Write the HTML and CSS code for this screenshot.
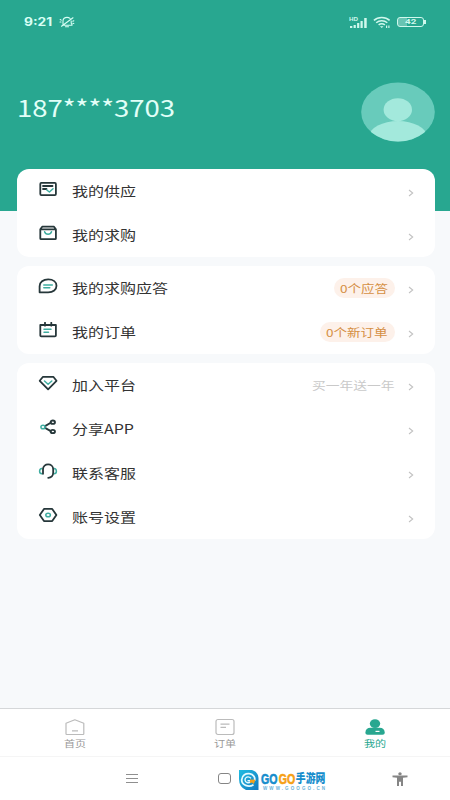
FILE: index.html
```html
<!DOCTYPE html>
<html lang="zh-CN">
<head>
<meta charset="utf-8">
<title>我的</title>
<link rel="stylesheet" href="styles.css">
</head>
<body>
<div class="screen">
  <header class="hero">
    <div class="status">
      <div class="status-left">
        <span class="clock"><span class="wide">9:21</span></span>
        <svg class="mute" width="16" height="12" viewBox="0 0 16 12" fill="none" stroke="currentColor" stroke-width="1.1" stroke-linecap="round"><path d="M5 9.2h8M4 8.8V5C4 2.5 5.800 1.400 8 1.400c1.200 0 2.300.4 3 1M12.200 5v2.200l.9 1.500M2.500 10.200L14 1.800M6.500 10.800h3M1.200 3.500l1 .6M1 6h1M14.800 4.800l-1 .5M14.800 7.500l-1-.3"/></svg>
      </div>
      <div class="status-right">
        <svg width="20" height="13" viewBox="0 0 20 13"><text class="hd" x="0" y="5.2" textLength="9" lengthAdjust="spacingAndGlyphs">HD</text><path fill="currentColor" d="M1 10h2.3v2H1zM4.600 9h2.200v3H4.600zM8.100 7h2.200v5H8.100zM11.500 5h2.200v7h-2.200zM15.200 2h2.500v10h-2.500z"/></svg>
        <svg class="wifi" width="19" height="13" viewBox="0 0 19 13" fill="none" stroke="currentColor" stroke-width="1.5"><path d="M.9 4.400C5 .6 12.500.6 16.600 4.400M3.200 6.800c3.100-2.700 8-2.700 11.100 0M5.600 8.900c1.800-1.400 4.500-1.400 6.300 0"/><path fill="currentColor" stroke="none" d="M6.900 10.200h3.700L8.750 12zM13 9.500h1.200V12H13zM15.300 9.500h1.200V12h-1.200z"/></svg>
        <span class="battery"><span class="wide">42</span></span><i class="battery-tip"></i>
      </div>
    </div>
    <div class="profile">
      <h1 class="phone"><span class="wide">187****3703</span></h1>
      <svg class="avatar" width="74" height="60" viewBox="0 0 74 60"><defs><clipPath id="round"><ellipse cx="37" cy="30" rx="36.800" ry="29.400"/></clipPath></defs><g clip-path="url(#round)"><path fill="#68cbbb" d="M0 0h74v60H0z"/><ellipse cx="36.800" cy="27.700" rx="14.200" ry="11.500" fill="#a3e9dc"/><ellipse cx="37" cy="54" rx="28.500" ry="15" fill="#a3e9dc"/></g></svg>
    </div>
  </header>

  <main class="cards">
    <section class="card">
      <div class="row">
        <svg class="icon" viewBox="0 0 20 16"><rect x="2.300" y="1.900" width="15.600" height="12.200" rx="1"/><path d="M5 5h9.500M5 8h3.500"/><path class="accent" d="M8.800 9l2.600 2L15 7.800"/></svg>
        <span class="label"><span class="wide">我的供应</span></span>
        <svg class="chevron" viewBox="0 0 6 8"><path d="M1 1l3.700 3L1 7"/></svg>
      </div>
      <div class="row">
        <svg class="icon" viewBox="0 0 20 16"><path d="M2.300 4.200L4.200 1.700H16l1.900 2.500v9.200q0 .7-.8.7H3.100q-.8 0-.8-.7zM2.300 4.400h15.600"/><path class="accent" d="M6.600 6.700c1 3.300 5.900 3.300 6.900 0"/></svg>
        <span class="label"><span class="wide">我的求购</span></span>
        <svg class="chevron" viewBox="0 0 6 8"><path d="M1 1l3.700 3L1 7"/></svg>
      </div>
    </section>
    <section class="card">
      <div class="row">
        <svg class="icon" viewBox="0 0 20 16"><path d="M1.600 14.300V8.200C1.600 4.200 5.200 1.400 10.200 1.400s8.300 2.700 8.300 6.400-3.300 6.500-8.300 6.500z"/><path class="accent" d="M5.800 6.900h8.500M5.800 9.700h6"/></svg>
        <span class="label"><span class="wide">我的求购应答</span></span>
        <span class="badge badge-answer"><span class="wide">0个应答</span></span>
        <svg class="chevron" viewBox="0 0 6 8"><path d="M1 1l3.700 3L1 7"/></svg>
      </div>
      <div class="row">
        <svg class="icon" viewBox="0 0 20 16"><path d="M2.300 3h15.600v10.400q0 .9-1 .9H3.300q-1 0-1-.9zM7 .7v3M13.300.7v3"/><path class="accent" d="M6 7.300h7M6 10.200h4.500"/></svg>
        <span class="label"><span class="wide">我的订单</span></span>
        <span class="badge badge-order"><span class="wide">0个新订单</span></span>
        <svg class="chevron" viewBox="0 0 6 8"><path d="M1 1l3.700 3L1 7"/></svg>
      </div>
    </section>
    <section class="card">
      <div class="row">
        <svg class="icon" viewBox="0 0 20 16"><path d="M5 1.800h10.300l3.200 4-8.400 8.500-8.400-8.500z"/><path class="accent" d="M6.500 6l3.600 3.200L13.800 6"/></svg>
        <span class="label"><span class="wide">加入平台</span></span>
        <span class="hint"><span class="wide">买一年送一年</span></span>
        <svg class="chevron" viewBox="0 0 6 8"><path d="M1 1l3.700 3L1 7"/></svg>
      </div>
      <div class="row">
        <svg class="icon" viewBox="0 0 20 16"><path d="M7 7.100l5.800-3.400M7 8.900l5.800 3.200"/><ellipse cx="14.800" cy="3.200" rx="2.200" ry="1.700"/><ellipse cx="14.800" cy="12.500" rx="2.200" ry="1.700"/><ellipse class="accent" cx="5" cy="8" rx="2.100" ry="1.800"/></svg>
        <span class="label"><span class="wide">分享APP</span></span>
        <svg class="chevron" viewBox="0 0 6 8"><path d="M1 1l3.700 3L1 7"/></svg>
      </div>
      <div class="row">
        <svg class="icon" viewBox="0 0 20 16"><path class="accent" d="M4 5.500C.8 5.800.8 10.500 4 10.800M16 5.500c3.200.3 3.200 5 0 5.300"/><path d="M5 10.800V6.300C5-.2 15.200-.2 15.200 6.300v3.200c0 3-2 5.300-5 5.300"/></svg>
        <span class="label"><span class="wide">联系客服</span></span>
        <svg class="chevron" viewBox="0 0 6 8"><path d="M1 1l3.700 3L1 7"/></svg>
      </div>
      <div class="row">
        <svg class="icon" viewBox="0 0 20 16"><path d="M6 1.900h8.200l4.200 6.100-4.200 6.100H6L1.800 8z"/><ellipse class="accent" cx="10.100" cy="8" rx="2.300" ry="1.800"/></svg>
        <span class="label"><span class="wide">账号设置</span></span>
        <svg class="chevron" viewBox="0 0 6 8"><path d="M1 1l3.700 3L1 7"/></svg>
      </div>
    </section>
  </main>

  <nav class="tabs">
    <div class="tab">
      <svg viewBox="0 0 20 18"><path d="M1 5.200L9.800 1.800l9 3.400v10.600q0 .7-.7.700H1.700q-.7 0-.7-.7zM7 12.800h6"/></svg>
      <span class="wide">首页</span>
    </div>
    <div class="tab">
      <svg viewBox="0 0 20 18"><rect x="1" y="1.500" width="18" height="15" rx="2"/><path d="M5.500 6.200h9M5.500 9.300h5.500"/></svg>
      <span class="wide">订单</span>
    </div>
    <div class="tab active">
      <svg viewBox="0 0 20 18"><ellipse class="solid" cx="10" cy="5.600" rx="5.200" ry="4.300"/><path class="solid" d="M.4 14.500c0-3 2-4.700 5-4.700h9.300c3 0 5 1.700 5 4.700 0 1.500-.8 2.200-2.200 2.200H2.600C1.200 16.700.4 16 .4 14.500z"/><path class="cut" d="M10.500 13.400h4"/></svg>
      <span class="wide">我的</span>
    </div>
  </nav>

  <footer class="system">
    <svg class="menu" width="14" height="11" viewBox="0 0 14 11"><path d="M1 1.500h12M1 5.500h12M1 9.500h12"/></svg>
    <i class="home"></i>
    <div class="brand">
      <svg width="20" height="20" viewBox="0 0 20 20"><defs><linearGradient id="sea" x1="0" y1="0" x2="1" y2="1"><stop offset="0" stop-color="#20bde2"/><stop offset="1" stop-color="#1478bf"/></linearGradient></defs><path fill="url(#sea)" d="M0 0h13q6 2 6.500 8v12H7Q0 17 0 9z"/><path fill="none" stroke="#e5faff" stroke-width="1.800" d="M14.500 14.800C9.500 18 2.500 15 2.700 9.800 3 5 7 3 10.500 3.700c4 .7 6 4 5 7"/><path fill="none" stroke="#e5faff" stroke-width="1.400" d="M12 10.700H8.500M12 8.200C9 5.500 5.800 7.300 6 10c.2 2.500 3.500 3.700 5.500 2"/><path fill="#f5a11c" d="M11 9.500l5.500.3-1.800 4.200-1.600-1.600-2.100.6z"/></svg>
      <svg class="brand-text" width="66" height="20" viewBox="0 0 66 20"><text class="go" x="0" y="14" fill="#168dcc" stroke="#168dcc" textLength="16.500" lengthAdjust="spacingAndGlyphs">GO</text><text class="go" x="17.800" y="14" fill="#f6a016" stroke="#f6a016" textLength="16.500" lengthAdjust="spacingAndGlyphs">GO</text><text class="cn" x="34.800" y="13.300" textLength="29.500" lengthAdjust="spacingAndGlyphs">手游网</text><text class="url" x="2" y="19.600" textLength="62">WWW.GOOGO.CN</text></svg>
    </div>
    <svg class="person" width="16" height="14" viewBox="0 0 16 14"><ellipse cx="8" cy="1.700" rx="1.700" ry="1.500"/><path d="M.5 3.500h15v1.700l-4.500.5V14H9V9.800H7V14H5V5.700L.5 5.200z"/></svg>
  </footer>
</div>
</body>
</html>
```
FILE: styles.css
```css
* { box-sizing: border-box; }

body {
  margin: 0;
  font-family: "Noto Sans CJK SC", "Noto Sans", sans-serif;
}

svg { display: block; flex: none; }

.screen {
  width: 450px;
  height: 800px;
  display: flex;
  flex-direction: column;
  background: #f7f9fb;
  overflow: hidden;
}

/* Wide letterforms */
.wide {
  display: inline-block;
  white-space: nowrap;
  transform: scaleX(1.23);
  transform-origin: left center;
}

.hero {
  flex: none;
  height: 211px;
  background: #28a790;
  color: #d9fff5;
}

.status {
  height: 44px;
  padding: 0 24px;
  display: flex;
  align-items: center;
  justify-content: space-between;
}

.status-left, .status-right { display: flex; align-items: center; }

.clock {
  width: 35px;
  font: 700 11.2px/16px Inter, sans-serif;
}

.status-right { color: #d0f8ed; }
.wifi { margin-left: 4px; }
.hd { font: 700 5.5px "Liberation Sans", sans-serif; fill: #d0f8ed; }

.battery {
  width: 27px;
  height: 10px;
  margin-left: 5px;
  border: 1.5px solid #d0f8ed;
  border-radius: 3px;
  background: linear-gradient(90deg, #68c4b3 38%, transparent 38%);
  padding-left: 7px;
  font: 700 8px/8px Roboto, sans-serif;
}

.battery-tip { width: 2px; height: 4px; background: #d0f8ed; }

.profile {
  display: flex;
  justify-content: space-between;
  padding: 38px 15px 0 17px;
}

.phone {
  margin: 8px 0 0;
  font-size: 23px;
  line-height: 34px;
  font-weight: 400;
  color: #e2fff8;
}

.phone .wide { transform: scaleX(1.195); }

.cards {
  flex: 1;
  margin-top: -42px;
  padding: 0 15px 0 17px;
  display: flex;
  flex-direction: column;
  gap: 9px;
}

.card { background: #fff; border-radius: 12px; }

.row {
  height: 44px;
  display: flex;
  align-items: center;
  padding: 0 21px;
}

.icon {
  width: 20px;
  height: 16px;
  margin: -5px 14px 0 0;
  fill: none;
  stroke: #26373a;
  stroke-width: 1.8;
  stroke-linecap: round;
  stroke-linejoin: round;
}

.icon .accent { stroke: #3fada0; stroke-width: 1.5; }

.label {
  flex: 1;
  font-size: 13px;
  line-height: 20px;
  color: #333;
}

.chevron {
  width: 6px;
  height: 8px;
  margin: 3px 0 0 13px;
  fill: none;
  stroke: #c2c2c2;
  stroke-width: 1.1;
}

.badge {
  height: 20px;
  padding-left: 6px;
  border-radius: 10px;
  background: #fdf1ea;
  color: #d58f43;
  font-size: 11px;
  line-height: 20px;
}

.badge-answer { width: 61px; }
.badge-order { width: 75px; }

.hint {
  width: 83px;
  font-size: 11.2px;
  line-height: 20px;
  color: #c9c9c9;
}

.tabs {
  flex: none;
  height: 48px;
  display: flex;
  background: #fff;
  border-top: 1px solid #d5d7d9;
}

.tab {
  flex: 1;
  display: flex;
  flex-direction: column;
  align-items: center;
  padding-top: 9px;
  color: #999;
  font-size: 9px;
  line-height: 14px;
}

.tab .wide { transform-origin: center; margin-top: 1px; }

.tab svg {
  width: 20px;
  height: 18px;
  fill: none;
  stroke: #bbb;
  stroke-width: 1.2;
  stroke-linejoin: round;
}

.tab.active { color: #28a790; }
.tab .solid { fill: #28a790; stroke: none; }
.tab .cut { stroke: #fff; }

.system {
  flex: none;
  height: 44px;
  display: flex;
  align-items: center;
  background: #fff;
  border-top: 1px solid #f5f5f5;
}

.menu { margin-left: 125px; fill: none; stroke: #8f8f8f; stroke-width: 1.1; }

.home {
  width: 13px;
  height: 11px;
  margin-left: 79px;
  border: 1.5px solid #858585;
  border-radius: 3px;
}

.brand { display: flex; margin: 3px 0 0 8px; }
.brand-text { margin-left: 2px; overflow: visible; }
.go { font: 700 15.5px "Liberation Sans", sans-serif; stroke-width: .6; }
.cn { font: 900 12px "Noto Sans CJK SC", sans-serif; fill: #168dcc; }
.url { font: 700 4.5px "Liberation Sans", sans-serif; fill: #6ab1d8; }
.person { margin-left: 65px; fill: #858585; }
```
